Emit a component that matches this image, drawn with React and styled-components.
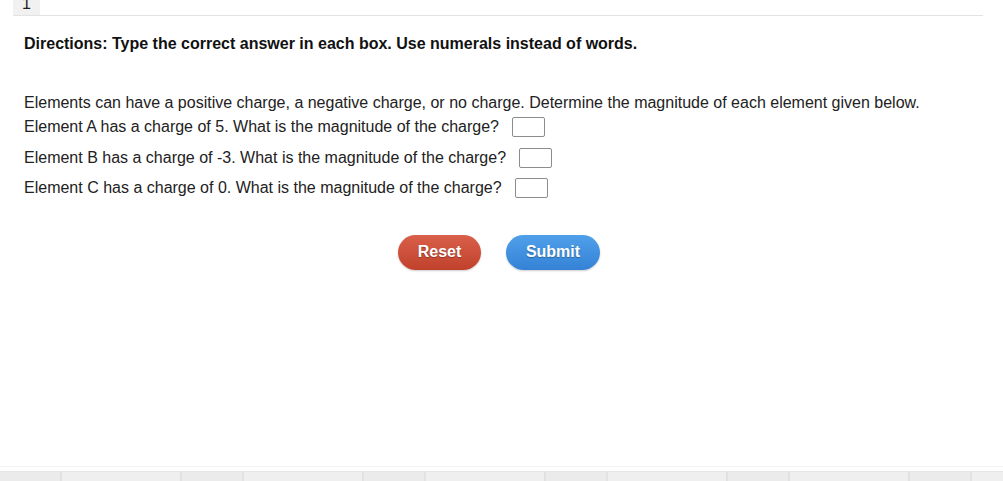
import React from "react";
import styled, { createGlobalStyle } from "styled-components";

const Global = createGlobalStyle`
  html, body { margin: 0; padding: 0; background: #fff; }
  body { font-family: Arial, "Liberation Sans", sans-serif; color: #222; }
`;

const questions = [
  { label: "Element A has a charge of 5. What is the magnitude of the charge?" },
  { label: "Element B has a charge of -3. What is the magnitude of the charge?" },
  { label: "Element C has a charge of 0. What is the magnitude of the charge?" },
];

export default function App() {
  return (
    <Styles.Page>
      <Global />
      <Styles.TabBar>
        <Styles.Tab>1</Styles.Tab>
      </Styles.TabBar>
      <Styles.Content>
        <Styles.Directions>
          Directions: Type the correct answer in each box. Use numerals instead of words.
        </Styles.Directions>
        <Styles.Intro>
          Elements can have a positive charge, a negative charge, or no charge. Determine the
          magnitude of each element given below.
        </Styles.Intro>
        {questions.map((q) => (
          <Styles.Row key={q.label}>
            <span>{q.label}</span>
            <Styles.Box />
          </Styles.Row>
        ))}
        <Styles.Buttons>
          <Styles.Button $color="red" $width={83}>Reset</Styles.Button>
          <Styles.Button $color="blue" $width={94}>Submit</Styles.Button>
        </Styles.Buttons>
      </Styles.Content>
      <Styles.Footer />
    </Styles.Page>
  );
}

const Styles = {
  Page: styled.div`
    height: 481px;
    display: flex;
    flex-direction: column;
    overflow: hidden;
  `,
  TabBar: styled.div`
    margin: 0 20px 0 13px;
    height: 15px;
    border-bottom: 1px solid #e3e3e3;
    display: flex;
  `,
  Tab: styled.div`
    width: 27px;
    height: 15px;
    background: #f1f1f1;
    font-size: 16px;
    line-height: 8px;
    text-align: center;
    color: #222;
    overflow: hidden;
  `,
  Content: styled.div`
    padding: 0 0 0 24px;
    width: 950px;
  `,
  Directions: styled.p`
    margin: 19px 0 0;
    font-size: 16px;
    font-weight: bold;
    color: #111;
    line-height: 18px;
  `,
  Intro: styled.p`
    margin: 41px 0 0;
    font-size: 16px;
    line-height: 18px;
  `,
  Row: styled.div`
    display: flex;
    align-items: center;
    height: 30.5px;
    font-size: 16px;
  `,
  Box: styled.span`
    display: inline-block;
    width: 31px;
    height: 18px;
    margin-left: 13px;
    border: 1px solid #8c8c8c;
    border-radius: 2px;
    background: #fff;
  `,
  Buttons: styled.div`
    display: flex;
    justify-content: center;
    gap: 25px;
    margin-top: 31px;
  `,
  Button: styled.button`
    width: ${(p) => p.$width}px;
    height: 35px;
    padding: 0;
    border: none;
    border-radius: 18px;
    font-family: Arial, "Liberation Sans", sans-serif;
    font-size: 16px;
    font-weight: bold;
    color: #fff;
    text-shadow: 0 1px 1px rgba(0, 0, 0, 0.3);
    background: ${(p) =>
      p.$color === "red"
        ? "linear-gradient(#d9604a, #c0412c)"
        : "linear-gradient(#4fa0ea, #3582d6)"};
    box-shadow: 0 1px 2px rgba(0, 0, 0, 0.2);
  `,
  Footer: styled.div`
    margin-top: auto;
    height: 9px;
    border-top: 1px solid #e6e6e6;
    box-shadow: 0 -4px 0 #fff, 0 -5px 0 #f3f3f3;
    background: repeating-linear-gradient(90deg, #ebebeb 0 60px, #e3e3e3 60px 62px, #efefef 62px 180px, #e1e1e1 180px 182px);
  `,
};
